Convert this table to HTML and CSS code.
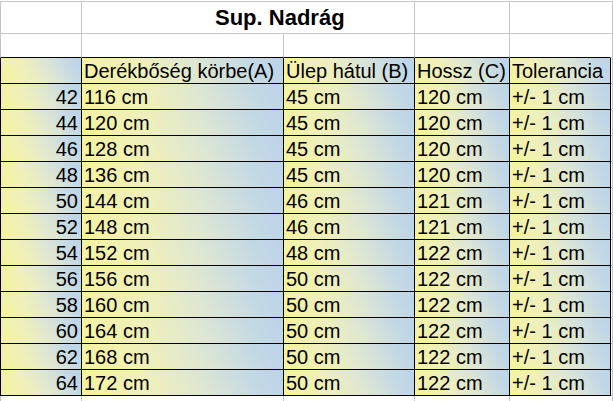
FILE: index.html
```html
<!DOCTYPE html>
<html lang="hu">
<head>
<meta charset="utf-8">
<title>Sup. Nadrág</title>
<link rel="stylesheet" href="styles.css">
</head>
<body>
<div class="sheet">
  <!-- title row -->
  <div class="c gr top first"></div>
  <div class="c gr top title span2">Sup. Nadrág</div>
  <div class="c gr top"></div>
  <div class="c gr top noright"></div>
  <div class="c gr top edge"></div>
  <!-- empty row -->
  <div class="c gr first blackb"></div>
  <div class="c gr blackb"></div>
  <div class="c gr blackb"></div>
  <div class="c gr blackb"></div>
  <div class="c gr noright blackb"></div>
  <div class="c gr edge"></div>
  <!-- header -->
  <div class="c tb first"></div>
  <div class="c tb">Derékbőség körbe(A)</div>
  <div class="c tb">Ülep hátul (B)</div>
  <div class="c tb">Hossz (C)</div>
  <div class="c tb">Tolerancia</div>
  <div class="c gr edge"></div>

  <div class="c tb first num">42</div><div class="c tb">116 cm</div><div class="c tb">45 cm</div><div class="c tb">120 cm</div><div class="c tb">+/- 1 cm</div><div class="c gr edge"></div>
  <div class="c tb first num">44</div><div class="c tb">120 cm</div><div class="c tb">45 cm</div><div class="c tb">120 cm</div><div class="c tb">+/- 1 cm</div><div class="c gr edge"></div>
  <div class="c tb first num">46</div><div class="c tb">128 cm</div><div class="c tb">45 cm</div><div class="c tb">120 cm</div><div class="c tb">+/- 1 cm</div><div class="c gr edge"></div>
  <div class="c tb first num">48</div><div class="c tb">136 cm</div><div class="c tb">45 cm</div><div class="c tb">120 cm</div><div class="c tb">+/- 1 cm</div><div class="c gr edge"></div>
  <div class="c tb first num">50</div><div class="c tb">144 cm</div><div class="c tb">46 cm</div><div class="c tb">121 cm</div><div class="c tb">+/- 1 cm</div><div class="c gr edge"></div>
  <div class="c tb first num">52</div><div class="c tb">148 cm</div><div class="c tb">46 cm</div><div class="c tb">121 cm</div><div class="c tb">+/- 1 cm</div><div class="c gr edge"></div>
  <div class="c tb first num">54</div><div class="c tb">152 cm</div><div class="c tb">48 cm</div><div class="c tb">122 cm</div><div class="c tb">+/- 1 cm</div><div class="c gr edge"></div>
  <div class="c tb first num">56</div><div class="c tb">156 cm</div><div class="c tb">50 cm</div><div class="c tb">122 cm</div><div class="c tb">+/- 1 cm</div><div class="c gr edge"></div>
  <div class="c tb first num">58</div><div class="c tb">160 cm</div><div class="c tb">50 cm</div><div class="c tb">122 cm</div><div class="c tb">+/- 1 cm</div><div class="c gr edge"></div>
  <div class="c tb first num">60</div><div class="c tb">164 cm</div><div class="c tb">50 cm</div><div class="c tb">122 cm</div><div class="c tb">+/- 1 cm</div><div class="c gr edge"></div>
  <div class="c tb first num">62</div><div class="c tb">168 cm</div><div class="c tb">50 cm</div><div class="c tb">122 cm</div><div class="c tb">+/- 1 cm</div><div class="c gr edge"></div>
  <div class="c tb first num">64</div><div class="c tb">172 cm</div><div class="c tb">50 cm</div><div class="c tb">122 cm</div><div class="c tb">+/- 1 cm</div><div class="c gr edge"></div>

  <!-- trailing empty row -->
  <div class="c gr first nob"></div>
  <div class="c gr nob"></div>
  <div class="c gr nob"></div>
  <div class="c gr nob"></div>
  <div class="c gr nob noright"></div>
  <div class="c gr nob edge"></div>
</div>
</body>
</html>
```

FILE: styles.css
```css
html, body {
  margin: 0;
  padding: 0;
  background: #ffffff;
}

body {
  width: 613px;
  height: 401px;
  overflow: hidden;
  font-family: "Liberation Sans", Arial, sans-serif;
  color: #000000;
}

.sheet {
  padding-top: 1px;
  display: grid;
  grid-template-columns: 82px 202px 131px 95px 101px 2px;
  grid-template-rows: 33px 24px repeat(13, 26px) 6px;
}

.c {
  box-sizing: border-box;
  font-size: 20px;
  line-height: 24px;
  padding: 1px 2px 0 2px;
  white-space: nowrap;
  overflow: hidden;
  border-right: 1px solid #000000;
  border-bottom: 1px solid #000000;
}

.gr {
  background: #ffffff;
  border-right-color: #c6c6c6;
  border-bottom-color: #c6c6c6;
}

.gr.first {
  border-left: 1px solid #c6c6c6;
}

.top {
  border-top: 1px solid #c6c6c6;
}

.blackb {
  border-bottom-color: #000000;
}

.noright {
  border-right-color: transparent;
}

.nob {
  border-bottom: none;
}

.edge {
  padding: 0;
}

.span2 {
  grid-column: span 2;
}

.title {
  font-size: 22px;
  font-weight: bold;
  line-height: 31px;
  padding: 0 0 0 133px;
}

.tb {
  background: linear-gradient(60deg, #f6f49c 0%, #efefbc 35%, #dde6d4 60%, #c3d8e6 85%, #bcd4e9 100%);
}

.tb.first {
  border-left: 1px solid #000000;
}

.num {
  text-align: right;
  padding-right: 3px;
}
```
